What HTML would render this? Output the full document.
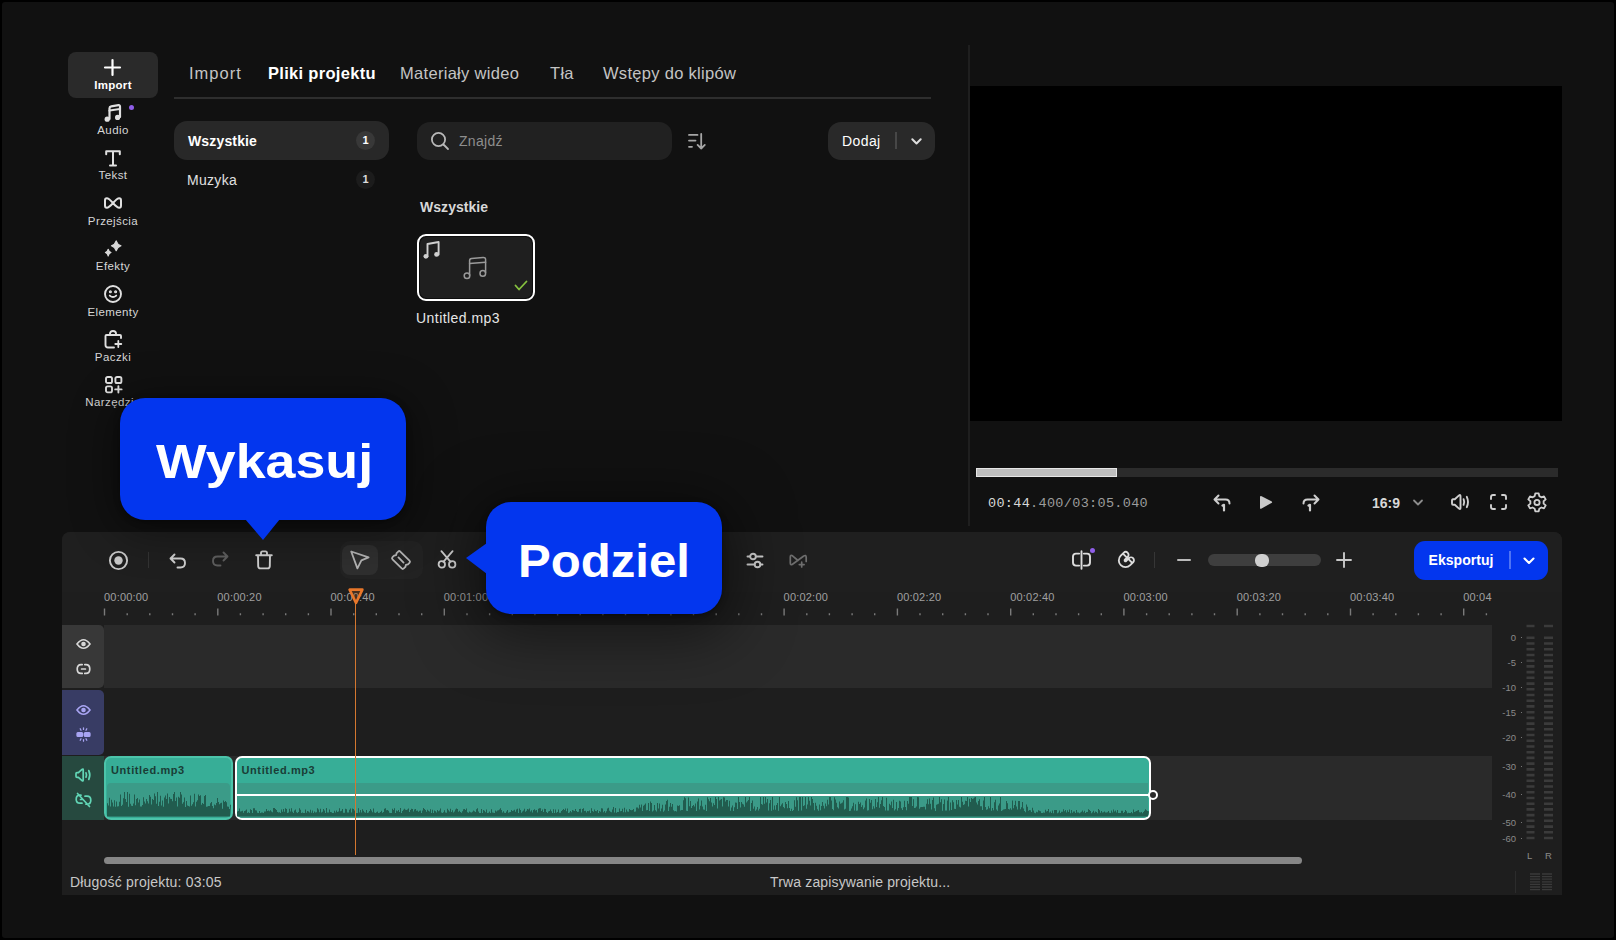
<!DOCTYPE html>
<html><head><meta charset="utf-8">
<style>
*{box-sizing:border-box;margin:0;padding:0}
html,body{width:1616px;height:940px;background:#000;overflow:hidden;font-family:"Liberation Sans",sans-serif;color:#ddd}
.a{position:absolute;white-space:nowrap}
#app{position:absolute;left:2px;top:2px;width:1612px;height:936px;background:#111;border-radius:3px}
.side{color:#d6d6d6;font-size:11.5px;letter-spacing:0.4px;text-align:center;width:90px;left:68px}
.tab{font-size:16.5px;letter-spacing:0.3px;color:#c4c4c4;top:63.8px}
svg{position:absolute;overflow:visible}
</style></head><body>
<div id="app"></div>

<!-- SIDEBAR -->
<div class="a" style="left:68px;top:52px;width:90px;height:46px;background:#2a2a2a;border-radius:8px"></div>
<svg style="left:104px;top:59px" width="17" height="17" viewBox="0 0 17 17"><path d="M8.5 1v15M1 8.5h15" stroke="#fff" stroke-width="2.2" stroke-linecap="round"/></svg>
<div class="a side" style="top:79px;color:#fff;font-weight:bold;letter-spacing:0.3px">Import</div>
<!-- audio -->
<svg style="left:103px;top:104px" width="19" height="19" viewBox="0 0 19 19" fill="none" stroke="#e0e0e0" stroke-width="2.2" stroke-linecap="round" stroke-linejoin="round"><path d="M6.5 15V4.2Q6.5 2.6 8.2 2.3L15.5 1.2Q17 1 17 2.6V13"/><path d="M6.5 6.5L17 5"/><circle cx="4.2" cy="15.2" r="2.6" fill="#e0e0e0" stroke="none"/><circle cx="14.6" cy="13.4" r="2.6" fill="#e0e0e0" stroke="none"/></svg>
<div class="a" style="left:128.5px;top:104.5px;width:5px;height:5px;border-radius:50%;background:#8f5ee8"></div>
<div class="a side" style="top:124px">Audio</div>
<!-- T -->
<svg style="left:105px;top:150px" width="16" height="17" viewBox="0 0 16 17" fill="none" stroke="#e0e0e0" stroke-width="2" stroke-linecap="round" stroke-linejoin="round"><path d="M1.2 4.3V1.2H14.8V4.3M8 1.2V15.6M5 15.6H11"/></svg>
<div class="a side" style="top:169px">Tekst</div>
<!-- bowtie -->
<svg style="left:104px;top:197px" width="18" height="12" viewBox="0 0 18 12" fill="none" stroke="#e0e0e0" stroke-width="2" stroke-linejoin="round"><path d="M9 6C6.4 3 4.4 1.2 2.8 1.2Q1 1.2 1 3.4V8.6Q1 10.8 2.8 10.8C4.4 10.8 6.4 9 9 6C11.6 3 13.6 1.2 15.2 1.2Q17 1.2 17 3.4V8.6Q17 10.8 15.2 10.8C13.6 10.8 11.6 9 9 6Z"/></svg>
<div class="a side" style="top:215px">Przejścia</div>
<!-- sparkles -->
<svg style="left:104px;top:240px" width="18" height="17" viewBox="0 0 18 17" fill="#d8d8d8" stroke="#d8d8d8" stroke-width="1.1" stroke-linejoin="round"><path d="M12.2 0.8Q13.4 4.6 17 5.8Q13.4 7 12.2 10.8Q11 7 7.4 5.8Q11 4.6 12.2 0.8Z"/><path d="M4.2 9.2Q4.9 11.9 7 12.6Q4.9 13.3 4.2 16Q3.5 13.3 1.4 12.6Q3.5 11.9 4.2 9.2Z"/></svg>
<div class="a side" style="top:260px">Efekty</div>
<!-- smiley -->
<svg style="left:104px;top:285px" width="18" height="18" viewBox="0 0 18 18" fill="none" stroke="#e0e0e0" stroke-width="1.9" stroke-linecap="round"><circle cx="9" cy="9" r="8"/><path d="M5.8 10.6Q9 13.6 12.2 10.6"/><circle cx="6.4" cy="6.8" r="0.6" fill="#e0e0e0"/><circle cx="11.6" cy="6.8" r="0.6" fill="#e0e0e0"/></svg>
<div class="a side" style="top:306px">Elementy</div>
<!-- bag -->
<svg style="left:104px;top:330px" width="18" height="19" viewBox="0 0 18 19" fill="none" stroke="#e0e0e0" stroke-width="1.9" stroke-linecap="round" stroke-linejoin="round"><path d="M6 5V3.6Q6 1 9 1Q12 1 12 3.6V5"/><path d="M10 17.5H4Q1.5 17.5 1.5 15V6Q1.5 5 2.5 5H16Q17 5 17 6V8"/><path d="M14.3 11V17M11.3 14H17.3" stroke-width="1.8"/></svg>
<div class="a side" style="top:351px">Paczki</div>
<!-- tools -->
<svg style="left:105px;top:376px" width="18" height="18" viewBox="0 0 18 18" fill="none" stroke="#e0e0e0" stroke-width="1.9" stroke-linejoin="round" stroke-linecap="round"><rect x="1" y="1" width="6" height="6" rx="1.6"/><rect x="10.4" y="1" width="6" height="6" rx="1.6"/><rect x="1" y="10.4" width="6" height="6" rx="1.6"/><path d="M13.4 10.2V16.6M10.2 13.4H16.6"/></svg>
<div class="a side" style="top:396px">Narzędzia</div>

<!-- TABS -->
<div class="a tab" style="left:189px;letter-spacing:1px">Import</div>
<div class="a tab" style="left:268px;color:#fff;font-weight:bold">Pliki projektu</div>
<div class="a tab" style="left:400px">Materiały wideo</div>
<div class="a tab" style="left:550px">Tła</div>
<div class="a tab" style="left:603px">Wstępy do klipów</div>
<div class="a" style="left:174px;top:97.2px;width:757px;height:1.6px;background:#2e2e2e"></div>

<!-- CATEGORY LIST -->
<div class="a" style="left:174px;top:121px;width:215px;height:39px;background:#282828;border-radius:13px"></div>
<div class="a" style="left:188px;top:133px;font-size:14px;font-weight:bold;color:#fff;letter-spacing:0.15px">Wszystkie</div>
<div class="a" style="left:356px;top:131px;width:19px;height:19px;border-radius:50%;background:#383838"></div>
<div class="a" style="left:356px;top:134px;width:19px;text-align:center;font-size:11px;font-weight:bold;color:#fff">1</div>
<div class="a" style="left:187px;top:171.5px;font-size:14px;color:#e0e0e0;letter-spacing:0.3px">Muzyka</div>
<div class="a" style="left:356px;top:170px;width:19px;height:19px;border-radius:50%;background:#1c1c1c"></div>
<div class="a" style="left:356px;top:173px;width:19px;text-align:center;font-size:11px;font-weight:bold;color:#ddd">1</div>

<!-- SEARCH -->
<div class="a" style="left:417px;top:121.5px;width:255px;height:38px;background:#212121;border-radius:13px"></div>
<svg style="left:430px;top:131px" width="20" height="20" viewBox="0 0 20 20" fill="none" stroke="#b8b8b8" stroke-width="1.8" stroke-linecap="round"><circle cx="8.5" cy="8.5" r="6.6"/><path d="M13.5 13.5L18 18"/></svg>
<div class="a" style="left:459px;top:133px;font-size:14px;color:#8e8e8e;letter-spacing:0.3px">Znajdź</div>
<!-- sort -->
<svg style="left:688px;top:133px" width="19" height="17" viewBox="0 0 19 17" fill="none" stroke="#a6a6a6" stroke-width="1.8" stroke-linecap="round" stroke-linejoin="round"><path d="M1 1.9H9.5M1 7.6H7.5M1 13.8H4"/><path d="M13.2 1V15.5M9.6 11.9L13.2 15.5L16.8 11.9"/></svg>

<!-- DODAJ -->
<div class="a" style="left:828px;top:121.5px;width:107px;height:38.5px;background:#292929;border-radius:13px"></div>
<div class="a" style="left:842px;top:133px;font-size:14px;color:#fff;letter-spacing:0.4px">Dodaj</div>
<div class="a" style="left:895px;top:132px;width:1.5px;height:17px;background:#474747"></div>
<svg style="left:911px;top:138px" width="11" height="7" viewBox="0 0 11 7" fill="none" stroke="#ddd" stroke-width="2" stroke-linecap="round" stroke-linejoin="round"><path d="M1.3 1.3L5.5 5.5L9.7 1.3"/></svg>

<div class="a" style="left:420px;top:199px;font-size:14px;font-weight:bold;color:#d8d8d8;letter-spacing:0.05px">Wszystkie</div>
<!-- thumbnail -->
<div class="a" style="left:417px;top:233.5px;width:117.5px;height:67px;border:2.2px solid #fff;border-radius:9px;background:#0e0e0e"></div>
<div class="a" style="left:420px;top:236.5px;width:111.5px;height:61px;border-radius:7px;background:#1f1f1f"></div>
<svg style="left:423px;top:240px" width="17" height="20" viewBox="0 0 17 20" fill="none" stroke="#d0d0d0" stroke-width="1.9" stroke-linecap="round" stroke-linejoin="round"><path d="M4.5 16.5V4L15.6 2V14.6"/><circle cx="2.9" cy="16.3" r="2.4" fill="#d0d0d0" stroke="none"/><circle cx="13.6" cy="14.4" r="2.4" fill="#d0d0d0" stroke="none"/></svg>
<svg style="left:463px;top:256px" width="24" height="24" viewBox="0 0 24 24" fill="none" stroke="#9a9a9a" stroke-width="1.5" stroke-linecap="round" stroke-linejoin="round"><path d="M6.6 19.2V4.6Q6.6 2.6 8.6 2.4L20 1.4Q22.6 1.2 22.6 3.6V16.4"/><path d="M6.6 7.6L22.6 6.3"/><circle cx="4" cy="19.8" r="2.8"/><circle cx="19.8" cy="17.4" r="2.8"/></svg>
<svg style="left:514px;top:280px" width="14" height="11" viewBox="0 0 14 11" fill="none" stroke="#86c23f" stroke-width="1.8" stroke-linecap="round" stroke-linejoin="round"><path d="M1.5 5.5L5 9.5L12.5 1.5"/></svg>
<div class="a" style="left:416px;top:310px;font-size:14px;color:#e6e6e6;letter-spacing:0.45px">Untitled.mp3</div>

<!-- PREVIEW -->
<div class="a" style="left:968px;top:44.5px;width:2px;height:481px;background:#1f1f1f"></div>
<div class="a" style="left:970px;top:86px;width:592px;height:335px;background:#000"></div>
<div class="a" style="left:976px;top:468px;width:582px;height:9px;background:#2b2b2b"></div>
<div class="a" style="left:976px;top:468px;width:141px;height:9px;background:#bebebe;border:1px solid #e6e6e6"></div>
<div class="a" style="left:988px;top:495.5px;font-family:'Liberation Mono',monospace;font-size:13.5px;color:#9c9c9c;letter-spacing:0.32px"><span style="color:#d8d8d8">00:44</span>.400/03:05.040</div>
<svg style="left:1213px;top:494px" width="19" height="18" viewBox="0 0 19 18" fill="none" stroke="#cfcfcf" stroke-width="2" stroke-linecap="round" stroke-linejoin="round"><path d="M5.5 1.5L1.5 5.5L5.5 9.5M1.5 5.5H12.5Q16.5 5.5 16.5 9.5"/><path d="M9.5 11.5L11 10.8V16.5" stroke-width="2.2"/></svg>
<svg style="left:1259px;top:495px" width="14" height="15" viewBox="0 0 14 15" fill="#c8c8c8"><path d="M1 2.2Q1 0.4 2.6 1.2L12.4 6.3Q13.9 7.2 12.4 8.1L2.6 13.6Q1 14.5 1 12.6Z"/></svg>
<svg style="left:1301px;top:494px" width="19" height="18" viewBox="0 0 19 18" fill="none" stroke="#cfcfcf" stroke-width="2" stroke-linecap="round" stroke-linejoin="round"><path d="M13.5 1.5L17.5 5.5L13.5 9.5M17.5 5.5H6.5Q2.5 5.5 2.5 9.5"/><path d="M7.5 11.5L9 10.8V16.5" stroke-width="2.2"/></svg>
<div class="a" style="left:1372px;top:495px;font-size:14px;font-weight:bold;color:#d8d8d8">16:9</div>
<svg style="left:1413px;top:499px" width="10" height="7" viewBox="0 0 10 7" fill="none" stroke="#8c8c8c" stroke-width="1.8" stroke-linecap="round" stroke-linejoin="round"><path d="M1 1.5L5 5.5L9 1.5"/></svg>
<svg style="left:1451px;top:494px" width="19" height="16" viewBox="0 0 19 16" fill="none" stroke="#d0d0d0" stroke-width="1.9" stroke-linecap="round" stroke-linejoin="round"><path d="M2 5.2Q1 5.2 1 6.5V9.5Q1 10.8 2 10.8H3.8L8 14.6Q9.5 15.8 9.5 13.8V2.2Q9.5 0.2 8 1.4L3.8 5.2Z"/><path d="M12.6 5.2Q13.8 8 12.6 10.8M15.8 2.8Q18.2 8 15.8 13.2"/></svg>
<svg style="left:1490px;top:494px" width="17" height="16" viewBox="0 0 17 16" fill="none" stroke="#d0d0d0" stroke-width="1.9" stroke-linecap="round" stroke-linejoin="round"><path d="M1 5V3Q1 1 3 1H5M12 1H14Q16 1 16 3V5M16 11V13Q16 15 14 15H12M5 15H3Q1 15 1 13V11"/></svg>
<svg style="left:1527px;top:492px" width="20" height="20" viewBox="0 0 20 20" fill="none" stroke="#d0d0d0" stroke-width="1.8" stroke-linejoin="round"><path d="M8.3 1.4H11.7L12.3 4.1L14.4 5.3L17 4.4L18.7 7.4L16.6 9.2V11.6L18.7 13.4L17 16.4L14.4 15.5L12.3 16.7L11.7 19.4H8.3L7.7 16.7L5.6 15.5L3 16.4L1.3 13.4L3.4 11.6V9.2L1.3 7.4L3 4.4L5.6 5.3L7.7 4.1Z"/><circle cx="10" cy="10.4" r="2.6"/></svg>

<!-- TIMELINE PANEL -->
<div class="a" style="left:62px;top:532px;width:1500px;height:362.5px;background:#1e1e1e;border-radius:8px 8px 0 0"></div>
<div class="a" style="left:62px;top:532px;width:1500px;height:60px;background:#1f1f1f;border-radius:8px 8px 0 0"></div>

<!-- TOOLBAR LEFT -->
<svg style="left:108px;top:550px" width="21" height="21" viewBox="0 0 21 21"><circle cx="10.5" cy="10.5" r="8.6" fill="none" stroke="#c8c8c8" stroke-width="1.9"/><circle cx="10.5" cy="10.5" r="4.2" fill="#c8c8c8"/></svg>
<div class="a" style="left:148px;top:552px;width:1px;height:16px;background:#333"></div>
<svg style="left:169px;top:552.5px" width="18" height="17" viewBox="0 0 18 17" fill="none" stroke="#cfcfcf" stroke-width="1.9" stroke-linecap="round" stroke-linejoin="round"><path d="M5.5 1.5L1.5 5.5L5.5 9.5M1.5 5.5H11.5Q16 5.5 16 10Q16 14.5 11.5 14.5H8.5"/></svg>
<svg style="left:211px;top:551px" width="18" height="17" viewBox="0 0 18 17" fill="none" stroke="#5e5e5e" stroke-width="1.9" stroke-linecap="round" stroke-linejoin="round"><path d="M12.5 1.5L16.5 5.5L12.5 9.5M16.5 5.5H6.5Q2 5.5 2 10Q2 14.5 6.5 14.5H9.5"/></svg>
<svg style="left:255px;top:550px" width="18" height="20" viewBox="0 0 18 20" fill="none" stroke="#cfcfcf" stroke-width="1.9" stroke-linecap="round" stroke-linejoin="round"><path d="M1.2 5.2H16.8M6 5V3Q6 1.4 7.6 1.4H10.4Q12 1.4 12 3V5M3 5.2L3.2 16.2Q3.3 18.4 5.5 18.4H12.5Q14.7 18.4 14.8 16.2L15 5.2"/></svg>
<!-- select group -->
<div class="a" style="left:339.5px;top:540.5px;width:83px;height:38px;background:#232323;border-radius:10px"></div>
<div class="a" style="left:342px;top:545px;width:36px;height:30px;background:#2f2f2f;border-radius:8px"></div>
<svg style="left:349px;top:549px" width="22" height="22" viewBox="0 0 22 22" fill="none" stroke="#b4b4b4" stroke-width="1.8" stroke-linejoin="round"><path d="M2.2 2.5L19.6 8.4L12.4 11.4L8.4 19.4Z"/></svg>
<svg style="left:386px;top:546px" width="30" height="28" viewBox="0 0 30 28" fill="none" stroke="#b4b4b4" stroke-width="1.8" stroke-linecap="round" stroke-linejoin="round"><g transform="translate(15 14) rotate(-45)"><path d="M-4 -8H-1.8L0 -6.9L1.8 -8H4Q5.5 -8 5.5 -6.5V6.5Q5.5 8 4 8H1.8L0 6.9L-1.8 8H-4Q-5.5 8 -5.5 6.5V-6.5Q-5.5 -8 -4 -8Z"/><path d="M0 -3.6V3.6"/></g></svg>
<svg style="left:437px;top:550px" width="20" height="20" viewBox="0 0 20 20" fill="none" stroke="#d0d0d0" stroke-width="1.8" stroke-linecap="round"><circle cx="4.8" cy="14.4" r="3.2"/><circle cx="15.2" cy="14.4" r="3.2"/><path d="M6.4 11.8L15.6 1.2M13.6 11.8L4.4 1.2"/></svg>

<!-- TOOLBAR MID/RIGHT -->
<svg style="left:746px;top:551px" width="18" height="17" viewBox="0 0 18 17" fill="none" stroke="#d0d0d0" stroke-width="1.9" stroke-linecap="round"><path d="M1.5 5.5H4M10 5.5H16.5M1.5 13.5H8.5M14.5 13.5H16.5"/><circle cx="7" cy="5.5" r="2.8"/><circle cx="11.5" cy="13.5" r="2.8"/></svg>
<svg style="left:788px;top:553px" width="21" height="16" viewBox="0 0 21 16" fill="none" stroke="#6e6e6e" stroke-width="1.7" stroke-linecap="round" stroke-linejoin="round"><path d="M10 7.5L4.5 2.8Q2.3 1.6 2.3 4V10Q2.3 12.4 4.5 11.2L15.4 3.2Q18.2 1.4 18.2 4.4V8.5"/><path d="M13.7 9.2V14M11.3 11.6H16.1"/></svg>
<svg style="left:1071px;top:550px" width="21" height="20" viewBox="0 0 21 20" fill="none" stroke="#dcdcdc" stroke-width="1.9" stroke-linecap="round" stroke-linejoin="round"><path d="M10.5 1.2V18.8M8.2 3.6H5Q2 3.6 2 6.6V12.6Q2 15.6 5 15.6H8.2M12.8 3.6H16Q19 3.6 19 6.6V12.6Q19 15.6 16 15.6H12.8"/></svg>
<div class="a" style="left:1089.5px;top:547.5px;width:5px;height:5px;border-radius:50%;background:#8f5ee8"></div>
<svg style="left:1112px;top:546px" width="28" height="28" viewBox="0 0 28 28" fill="none" stroke="#dcdcdc" stroke-width="2.1" stroke-linejoin="round"><g transform="translate(13.5 14.4) rotate(45) scale(0.88)"><path d="M-7.6 -4.6V0A7.6 7.6 0 0 0 7.6 0V-4.6A3.3 3.3 0 0 0 1 -4.6V0A1 1 0 0 1 -1 0V-4.6A3.3 3.3 0 0 0 -7.6 -4.6Z"/><path d="M-7.6 -3.4H-1M1 -3.4H7.6"/></g></svg>
<div class="a" style="left:1154px;top:552px;width:1px;height:16px;background:#363636"></div>
<div class="a" style="left:1177px;top:559px;width:13.5px;height:2px;background:#bbb;border-radius:1px"></div>
<div class="a" style="left:1208px;top:554px;width:113px;height:12px;background:#3e3e3e;border-radius:6px"></div>
<div class="a" style="left:1255px;top:553.5px;width:14px;height:13px;background:#cfcfcf;border-radius:6px"></div>
<svg style="left:1336px;top:552px" width="16" height="16" viewBox="0 0 16 16"><path d="M8 1V15M1 8H15" stroke="#c8c8c8" stroke-width="1.9" stroke-linecap="round"/></svg>
<!-- EXPORT -->
<div class="a" style="left:1414px;top:541px;width:134px;height:38.5px;background:#0336ee;border-radius:11px"></div>
<div class="a" style="left:1428.5px;top:552.3px;font-size:14px;font-weight:bold;color:#fff;letter-spacing:0.05px">Eksportuj</div>
<div class="a" style="left:1508.5px;top:551px;width:2px;height:18px;background:#4f74f4"></div>
<svg style="left:1523px;top:557px" width="12" height="8" viewBox="0 0 12 8" fill="none" stroke="#fff" stroke-width="2.1" stroke-linecap="round" stroke-linejoin="round"><path d="M1.5 1.5L6 6L10.5 1.5"/></svg>

<!-- RULER -->
<div class="a" style="left:62px;top:580px;width:1430px;height:40px;overflow:hidden"><div class="a" style="left:calc(-62px + 104.0px);top:11px;font-size:11px;color:#a0a0a0;letter-spacing:0.2px">00:00:00</div><div class="a" style="left:calc(-62px + 217.3px);top:11px;font-size:11px;color:#a0a0a0;letter-spacing:0.2px">00:00:20</div><div class="a" style="left:calc(-62px + 330.5px);top:11px;font-size:11px;color:#a0a0a0;letter-spacing:0.2px">00:00:40</div><div class="a" style="left:calc(-62px + 443.8px);top:11px;font-size:11px;color:#a0a0a0;letter-spacing:0.2px">00:01:00</div><div class="a" style="left:calc(-62px + 557.1px);top:11px;font-size:11px;color:#a0a0a0;letter-spacing:0.2px">00:01:20</div><div class="a" style="left:calc(-62px + 670.4px);top:11px;font-size:11px;color:#a0a0a0;letter-spacing:0.2px">00:01:40</div><div class="a" style="left:calc(-62px + 783.6px);top:11px;font-size:11px;color:#a0a0a0;letter-spacing:0.2px">00:02:00</div><div class="a" style="left:calc(-62px + 896.9px);top:11px;font-size:11px;color:#a0a0a0;letter-spacing:0.2px">00:02:20</div><div class="a" style="left:calc(-62px + 1010.2px);top:11px;font-size:11px;color:#a0a0a0;letter-spacing:0.2px">00:02:40</div><div class="a" style="left:calc(-62px + 1123.4px);top:11px;font-size:11px;color:#a0a0a0;letter-spacing:0.2px">00:03:00</div><div class="a" style="left:calc(-62px + 1236.7px);top:11px;font-size:11px;color:#a0a0a0;letter-spacing:0.2px">00:03:20</div><div class="a" style="left:calc(-62px + 1350.0px);top:11px;font-size:11px;color:#a0a0a0;letter-spacing:0.2px">00:03:40</div><div class="a" style="left:calc(-62px + 1463.2px);top:11px;font-size:11px;color:#a0a0a0;letter-spacing:0.2px">00:04:00</div></div><svg style="left:0;top:0" width="1616" height="940"><path d="M104.5 608.5V615.5M127.2 613.3V615.3M149.8 613.3V615.3M172.5 613.3V615.3M195.1 613.3V615.3M217.8 608.5V615.5M240.4 613.3V615.3M263.1 613.3V615.3M285.7 613.3V615.3M308.4 613.3V615.3M331.0 608.5V615.5M353.7 613.3V615.3M376.3 613.3V615.3M399.0 613.3V615.3M421.7 613.3V615.3M444.3 608.5V615.5M467.0 613.3V615.3M489.6 613.3V615.3M512.3 613.3V615.3M534.9 613.3V615.3M557.6 608.5V615.5M580.2 613.3V615.3M602.9 613.3V615.3M625.5 613.3V615.3M648.2 613.3V615.3M670.9 608.5V615.5M693.5 613.3V615.3M716.2 613.3V615.3M738.8 613.3V615.3M761.5 613.3V615.3M784.1 608.5V615.5M806.8 613.3V615.3M829.4 613.3V615.3M852.1 613.3V615.3M874.7 613.3V615.3M897.4 608.5V615.5M920.0 613.3V615.3M942.7 613.3V615.3M965.4 613.3V615.3M988.0 613.3V615.3M1010.7 608.5V615.5M1033.3 613.3V615.3M1056.0 613.3V615.3M1078.6 613.3V615.3M1101.3 613.3V615.3M1123.9 608.5V615.5M1146.6 613.3V615.3M1169.2 613.3V615.3M1191.9 613.3V615.3M1214.5 613.3V615.3M1237.2 608.5V615.5M1259.9 613.3V615.3M1282.5 613.3V615.3M1305.2 613.3V615.3M1327.8 613.3V615.3M1350.5 608.5V615.5M1373.1 613.3V615.3M1395.8 613.3V615.3M1418.4 613.3V615.3M1441.1 613.3V615.3M1463.7 608.5V615.5M1486.4 613.3V615.3" stroke="#7a7a7a" stroke-width="1.4"/></svg>

<!-- TRACKS -->
<div class="a" style="left:104px;top:624.5px;width:1387.7px;height:63.5px;background:#2a2a2a"></div>
<div class="a" style="left:62px;top:624.5px;width:42px;height:63.5px;background:#383838;border-radius:0 5px 5px 0"></div>
<svg style="left:76px;top:638px" width="15" height="12" viewBox="0 0 15 12" fill="none" stroke="#d8d8d8" stroke-width="1.6"><path d="M1 6Q7.5 -2.6 14 6Q7.5 14.6 1 6Z"/><circle cx="7.5" cy="6" r="1.5" fill="#d8d8d8"/></svg>
<svg style="left:76px;top:663px" width="15" height="12" viewBox="0 0 15 12" fill="none" stroke="#d8d8d8" stroke-width="1.7" stroke-linecap="round"><path d="M6.2 1.6H5Q1.2 1.6 1.2 6Q1.2 10.4 5 10.4H6.2M8.8 1.6H10Q13.8 1.6 13.8 6Q13.8 10.4 10 10.4H8.8M5.6 6H9.4"/></svg>

<div class="a" style="left:62px;top:689.5px;width:42px;height:65px;background:#383c64;border-radius:0 5px 5px 0"></div>
<svg style="left:76px;top:704px" width="15" height="12" viewBox="0 0 15 12" fill="none" stroke="#a8a4f2" stroke-width="1.6"><path d="M1 6Q7.5 -2.6 14 6Q7.5 14.6 1 6Z"/><circle cx="7.5" cy="6" r="1.5" fill="#a8a4f2"/></svg>
<svg style="left:76px;top:727px" width="15" height="15" viewBox="0 0 15 15" fill="none" stroke="#a8a4f2" stroke-width="1.3" stroke-linecap="round"><rect x="1" y="5.6" width="5.6" height="3.8" rx="1" fill="#a8a4f2"/><rect x="8.4" y="5.6" width="5.6" height="3.8" rx="1" fill="#a8a4f2"/><path d="M7.5 0.8V2.4M4.2 1.8L5 3.2M10.8 1.8L10 3.2M7.5 12.6V14.2M4.2 13.2L5 11.8M10.8 13.2L10 11.8"/></svg>

<div class="a" style="left:104px;top:756px;width:1387.7px;height:63.5px;background:#2a2a2a"></div>
<div class="a" style="left:62px;top:756px;width:42px;height:63.5px;background:#26493f"></div>
<svg style="left:75px;top:768px" width="17" height="14" viewBox="0 0 17 14" fill="none" stroke="#62d6b6" stroke-width="1.7" stroke-linecap="round" stroke-linejoin="round"><path d="M2 4.6Q1 4.6 1 5.8V8.2Q1 9.4 2 9.4H3.4L7 12.6Q8.2 13.6 8.2 12V2Q8.2 0.4 7 1.4L3.4 4.6Z"/><path d="M11 4.8Q12 7 11 9.2M13.8 2.6Q15.8 7 13.8 11.4"/></svg>
<svg style="left:75px;top:792px" width="17" height="16" viewBox="0 0 17 16" fill="none" stroke="#62d6b6" stroke-width="1.7" stroke-linecap="round"><path d="M6 3.2H5Q1.2 3.2 1.2 7.2Q1.2 11.2 5 11.2H7M10 4.2H12Q15.8 4.2 15.8 8.2Q15.8 12.2 12 12.2H11M5.5 7.5H7.5M2.5 1.5L14.5 14.5"/></svg>

<!-- CLIP 1 -->
<div class="a" style="left:104px;top:756px;width:129px;height:64px;background:#37ae97;border:2px solid #4cc4aa;border-radius:7px"></div>
<div class="a" style="left:107px;top:783px;width:123px;height:34px;background:#3b9b88;border-radius:4px"></div>
<svg style="left:0;top:0" width="1616" height="940"><path d="M107 816.5L107.0 803.3L108.0 803.3L108.0 805.6L109.0 805.6L109.0 797.7L110.0 797.7L110.0 806.4L111.0 806.4L111.0 799.8L112.0 799.8L112.0 802.6L113.0 802.6L113.0 806.6L114.0 806.6L114.0 800.3L115.0 800.3L115.0 806.8L116.0 806.8L116.0 801.5L117.0 801.5L117.0 806.5L118.0 806.5L118.0 806.3L119.0 806.3L119.0 801.7L120.0 801.7L120.0 794.4L121.0 794.4L121.0 805.9L122.0 805.9L122.0 804.7L123.0 804.7L123.0 798.2L124.0 798.2L124.0 792.0L125.0 792.0L125.0 799.1L126.0 799.1L126.0 802.1L127.0 802.1L127.0 792.0L128.0 792.0L128.0 806.7L129.0 806.7L129.0 793.7L130.0 793.7L130.0 803.8L131.0 803.8L131.0 805.7L132.0 805.7L132.0 806.0L133.0 806.0L133.0 803.5L134.0 803.5L134.0 794.6L135.0 794.6L135.0 805.2L136.0 805.2L136.0 799.0L137.0 799.0L137.0 798.0L138.0 798.0L138.0 802.5L139.0 802.5L139.0 799.6L140.0 799.6L140.0 806.5L141.0 806.5L141.0 806.6L142.0 806.6L142.0 804.9L143.0 804.9L143.0 797.2L144.0 797.2L144.0 801.6L145.0 801.6L145.0 803.4L146.0 803.4L146.0 798.9L147.0 798.9L147.0 801.2L148.0 801.2L148.0 803.6L149.0 803.6L149.0 795.0L150.0 795.0L150.0 796.8L151.0 796.8L151.0 804.4L152.0 804.4L152.0 799.1L153.0 799.1L153.0 800.0L154.0 800.0L154.0 793.4L155.0 793.4L155.0 796.3L156.0 796.3L156.0 803.8L157.0 803.8L157.0 792.0L158.0 792.0L158.0 806.0L159.0 806.0L159.0 801.8L160.0 801.8L160.0 795.7L161.0 795.7L161.0 805.6L162.0 805.6L162.0 800.6L163.0 800.6L163.0 806.7L164.0 806.7L164.0 797.4L165.0 797.4L165.0 795.6L166.0 795.6L166.0 799.1L167.0 799.1L167.0 793.4L168.0 793.4L168.0 803.4L169.0 803.4L169.0 796.9L170.0 796.9L170.0 798.8L171.0 798.8L171.0 799.0L172.0 799.0L172.0 801.2L173.0 801.2L173.0 794.1L174.0 794.1L174.0 792.0L175.0 792.0L175.0 800.9L176.0 800.9L176.0 797.5L177.0 797.5L177.0 806.6L178.0 806.6L178.0 796.8L179.0 796.8L179.0 797.8L180.0 797.8L180.0 792.0L181.0 792.0L181.0 794.5L182.0 794.5L182.0 803.8L183.0 803.8L183.0 802.3L184.0 802.3L184.0 797.4L185.0 797.4L185.0 806.9L186.0 806.9L186.0 801.1L187.0 801.1L187.0 805.4L188.0 805.4L188.0 806.0L189.0 806.0L189.0 806.6L190.0 806.6L190.0 795.5L191.0 795.5L191.0 805.8L192.0 805.8L192.0 804.3L193.0 804.3L193.0 802.2L194.0 802.2L194.0 793.7L195.0 793.7L195.0 806.5L196.0 806.5L196.0 801.7L197.0 801.7L197.0 800.2L198.0 800.2L198.0 794.4L199.0 794.4L199.0 795.9L200.0 795.9L200.0 795.3L201.0 795.3L201.0 804.8L202.0 804.8L202.0 803.0L203.0 803.0L203.0 803.9L204.0 803.9L204.0 795.9L205.0 795.9L205.0 794.9L206.0 794.9L206.0 806.7L207.0 806.7L207.0 806.5L208.0 806.5L208.0 806.0L209.0 806.0L209.0 806.1L210.0 806.1L210.0 803.2L211.0 803.2L211.0 801.9L212.0 801.9L212.0 806.1L213.0 806.1L213.0 808.3L214.0 808.3L214.0 804.6L215.0 804.6L215.0 805.3L216.0 805.3L216.0 803.1L217.0 803.1L217.0 798.1L218.0 798.1L218.0 801.9L219.0 801.9L219.0 804.2L220.0 804.2L220.0 803.2L221.0 803.2L221.0 802.7L222.0 802.7L222.0 808.7L223.0 808.7L223.0 800.4L224.0 800.4L224.0 802.0L225.0 802.0L225.0 801.1L226.0 801.1L226.0 802.3L227.0 802.3L227.0 806.6L228.0 806.6L228.0 806.7L229.0 806.7L229.0 809.0L230.0 809.0L230.0 804.8L231.0 804.8L230 816.5Z" fill="#215c4e"/></svg>
<div class="a" style="left:111px;top:764px;font-size:11px;font-weight:bold;color:#1a3d36;letter-spacing:0.6px">Untitled.mp3</div>
<!-- CLIP 2 -->
<div class="a" style="left:234.5px;top:756px;width:916px;height:64px;background:#37ae97;border:2.4px solid #fff;border-radius:7px"></div>
<div class="a" style="left:237px;top:783px;width:911px;height:34.5px;background:#3b9b88;border-radius:0 0 5px 5px"></div>
<svg style="left:0;top:0" width="1616" height="940"><path d="M237 816.5L237.0 811.5L238.0 811.5L238.0 810.9L239.0 810.9L239.0 808.6L240.0 808.6L240.0 811.4L241.0 811.4L241.0 811.2L242.0 811.2L242.0 810.7L243.0 810.7L243.0 812.7L244.0 812.7L244.0 811.1L245.0 811.1L245.0 810.5L246.0 810.5L246.0 809.5L247.0 809.5L247.0 813.0L248.0 813.0L248.0 812.2L249.0 812.2L249.0 813.0L250.0 813.0L250.0 809.3L251.0 809.3L251.0 810.1L252.0 810.1L252.0 813.1L253.0 813.1L253.0 808.2L254.0 808.2L254.0 808.3L255.0 808.3L255.0 810.3L256.0 810.3L256.0 810.6L257.0 810.6L257.0 812.8L258.0 812.8L258.0 813.1L259.0 813.1L259.0 811.1L260.0 811.1L260.0 813.0L261.0 813.0L261.0 812.6L262.0 812.6L262.0 812.4L263.0 812.4L263.0 813.1L264.0 813.1L264.0 811.4L265.0 811.4L265.0 811.5L266.0 811.5L266.0 809.1L267.0 809.1L267.0 811.1L268.0 811.1L268.0 810.4L269.0 810.4L269.0 811.2L270.0 811.2L270.0 810.3L271.0 810.3L271.0 811.4L272.0 811.4L272.0 812.3L273.0 812.3L273.0 808.1L274.0 808.1L274.0 808.1L275.0 808.1L275.0 809.1L276.0 809.1L276.0 810.0L277.0 810.0L277.0 812.1L278.0 812.1L278.0 812.5L279.0 812.5L279.0 812.2L280.0 812.2L280.0 813.0L281.0 813.0L281.0 809.6L282.0 809.6L282.0 811.7L283.0 811.7L283.0 809.1L284.0 809.1L284.0 811.8L285.0 811.8L285.0 808.3L286.0 808.3L286.0 809.1L287.0 809.1L287.0 813.1L288.0 813.1L288.0 812.6L289.0 812.6L289.0 808.7L290.0 808.7L290.0 811.4L291.0 811.4L291.0 808.2L292.0 808.2L292.0 811.7L293.0 811.7L293.0 813.0L294.0 813.0L294.0 810.5L295.0 810.5L295.0 809.5L296.0 809.5L296.0 812.3L297.0 812.3L297.0 813.0L298.0 813.0L298.0 812.0L299.0 812.0L299.0 808.3L300.0 808.3L300.0 809.7L301.0 809.7L301.0 812.9L302.0 812.9L302.0 812.4L303.0 812.4L303.0 812.9L304.0 812.9L304.0 813.0L305.0 813.0L305.0 809.4L306.0 809.4L306.0 812.7L307.0 812.7L307.0 810.9L308.0 810.9L308.0 811.5L309.0 811.5L309.0 812.6L310.0 812.6L310.0 809.8L311.0 809.8L311.0 812.8L312.0 812.8L312.0 810.4L313.0 810.4L313.0 812.9L314.0 812.9L314.0 811.6L315.0 811.6L315.0 812.6L316.0 812.6L316.0 812.3L317.0 812.3L317.0 808.2L318.0 808.2L318.0 809.4L319.0 809.4L319.0 812.2L320.0 812.2L320.0 808.8L321.0 808.8L321.0 812.6L322.0 812.6L322.0 811.8L323.0 811.8L323.0 809.0L324.0 809.0L324.0 810.4L325.0 810.4L325.0 812.9L326.0 812.9L326.0 808.1L327.0 808.1L327.0 812.6L328.0 812.6L328.0 812.4L329.0 812.4L329.0 809.6L330.0 809.6L330.0 812.1L331.0 812.1L331.0 812.2L332.0 812.2L332.0 813.0L333.0 813.0L333.0 813.0L334.0 813.0L334.0 810.7L335.0 810.7L335.0 812.4L336.0 812.4L336.0 810.6L337.0 810.6L337.0 811.9L338.0 811.9L338.0 811.5L339.0 811.5L339.0 808.3L340.0 808.3L340.0 811.3L341.0 811.3L341.0 810.8L342.0 810.8L342.0 809.0L343.0 809.0L343.0 812.7L344.0 812.7L344.0 812.8L345.0 812.8L345.0 808.7L346.0 808.7L346.0 809.3L347.0 809.3L347.0 812.4L348.0 812.4L348.0 812.6L349.0 812.6L349.0 809.8L350.0 809.8L350.0 808.5L351.0 808.5L351.0 812.6L352.0 812.6L352.0 808.4L353.0 808.4L353.0 808.9L354.0 808.9L354.0 810.6L355.0 810.6L355.0 811.6L356.0 811.6L356.0 812.9L357.0 812.9L357.0 813.1L358.0 813.1L358.0 808.3L359.0 808.3L359.0 812.5L360.0 812.5L360.0 810.0L361.0 810.0L361.0 812.4L362.0 812.4L362.0 809.3L363.0 809.3L363.0 810.7L364.0 810.7L364.0 812.2L365.0 812.2L365.0 812.7L366.0 812.7L366.0 809.9L367.0 809.9L367.0 813.0L368.0 813.0L368.0 812.5L369.0 812.5L369.0 810.9L370.0 810.9L370.0 809.1L371.0 809.1L371.0 810.6L372.0 810.6L372.0 812.3L373.0 812.3L373.0 808.6L374.0 808.6L374.0 812.6L375.0 812.6L375.0 813.1L376.0 813.1L376.0 812.3L377.0 812.3L377.0 811.5L378.0 811.5L378.0 813.0L379.0 813.0L379.0 812.7L380.0 812.7L380.0 811.9L381.0 811.9L381.0 810.8L382.0 810.8L382.0 812.8L383.0 812.8L383.0 811.9L384.0 811.9L384.0 808.8L385.0 808.8L385.0 808.2L386.0 808.2L386.0 810.3L387.0 810.3L387.0 810.1L388.0 810.1L388.0 810.7L389.0 810.7L389.0 812.8L390.0 812.8L390.0 813.1L391.0 813.1L391.0 813.1L392.0 813.1L392.0 808.7L393.0 808.7L393.0 810.0L394.0 810.0L394.0 808.3L395.0 808.3L395.0 813.1L396.0 813.1L396.0 810.4L397.0 810.4L397.0 811.3L398.0 811.3L398.0 809.9L399.0 809.9L399.0 812.1L400.0 812.1L400.0 808.0L401.0 808.0L401.0 813.0L402.0 813.0L402.0 811.0L403.0 811.0L403.0 809.8L404.0 809.8L404.0 808.7L405.0 808.7L405.0 809.8L406.0 809.8L406.0 810.0L407.0 810.0L407.0 809.5L408.0 809.5L408.0 808.6L409.0 808.6L409.0 812.0L410.0 812.0L410.0 810.1L411.0 810.1L411.0 808.7L412.0 808.7L412.0 808.9L413.0 808.9L413.0 811.6L414.0 811.6L414.0 809.5L415.0 809.5L415.0 809.0L416.0 809.0L416.0 810.8L417.0 810.8L417.0 810.5L418.0 810.5L418.0 811.8L419.0 811.8L419.0 810.7L420.0 810.7L420.0 810.6L421.0 810.6L421.0 813.0L422.0 813.0L422.0 810.4L423.0 810.4L423.0 808.1L424.0 808.1L424.0 808.9L425.0 808.9L425.0 809.9L426.0 809.9L426.0 811.8L427.0 811.8L427.0 809.8L428.0 809.8L428.0 810.8L429.0 810.8L429.0 811.5L430.0 811.5L430.0 809.2L431.0 809.2L431.0 813.0L432.0 813.0L432.0 809.7L433.0 809.7L433.0 813.1L434.0 813.1L434.0 810.6L435.0 810.6L435.0 811.3L436.0 811.3L436.0 812.5L437.0 812.5L437.0 810.1L438.0 810.1L438.0 811.2L439.0 811.2L439.0 810.6L440.0 810.6L440.0 808.6L441.0 808.6L441.0 812.4L442.0 812.4L442.0 813.1L443.0 813.1L443.0 812.2L444.0 812.2L444.0 810.2L445.0 810.2L445.0 812.6L446.0 812.6L446.0 812.7L447.0 812.7L447.0 808.7L448.0 808.7L448.0 810.3L449.0 810.3L449.0 811.5L450.0 811.5L450.0 808.8L451.0 808.8L451.0 812.1L452.0 812.1L452.0 810.3L453.0 810.3L453.0 812.6L454.0 812.6L454.0 811.6L455.0 811.6L455.0 809.4L456.0 809.4L456.0 808.6L457.0 808.6L457.0 808.9L458.0 808.9L458.0 811.8L459.0 811.8L459.0 810.7L460.0 810.7L460.0 812.1L461.0 812.1L461.0 812.8L462.0 812.8L462.0 811.2L463.0 811.2L463.0 809.2L464.0 809.2L464.0 809.1L465.0 809.1L465.0 810.0L466.0 810.0L466.0 808.4L467.0 808.4L467.0 812.3L468.0 812.3L468.0 812.7L469.0 812.7L469.0 811.5L470.0 811.5L470.0 812.3L471.0 812.3L471.0 812.6L472.0 812.6L472.0 811.7L473.0 811.7L473.0 810.5L474.0 810.5L474.0 811.2L475.0 811.2L475.0 812.1L476.0 812.1L476.0 809.2L477.0 809.2L477.0 808.2L478.0 808.2L478.0 811.5L479.0 811.5L479.0 813.0L480.0 813.0L480.0 813.1L481.0 813.1L481.0 808.9L482.0 808.9L482.0 813.1L483.0 813.1L483.0 810.0L484.0 810.0L484.0 810.8L485.0 810.8L485.0 812.2L486.0 812.2L486.0 809.5L487.0 809.5L487.0 813.1L488.0 813.1L488.0 812.8L489.0 812.8L489.0 811.4L490.0 811.4L490.0 813.1L491.0 813.1L491.0 809.2L492.0 809.2L492.0 812.5L493.0 812.5L493.0 812.8L494.0 812.8L494.0 813.1L495.0 813.1L495.0 810.5L496.0 810.5L496.0 811.5L497.0 811.5L497.0 810.5L498.0 810.5L498.0 810.3L499.0 810.3L499.0 809.4L500.0 809.4L500.0 808.3L501.0 808.3L501.0 810.1L502.0 810.1L502.0 812.6L503.0 812.6L503.0 811.3L504.0 811.3L504.0 812.7L505.0 812.7L505.0 813.1L506.0 813.1L506.0 811.4L507.0 811.4L507.0 810.0L508.0 810.0L508.0 812.7L509.0 812.7L509.0 812.3L510.0 812.3L510.0 812.0L511.0 812.0L511.0 810.1L512.0 810.1L512.0 811.1L513.0 811.1L513.0 810.6L514.0 810.6L514.0 809.7L515.0 809.7L515.0 811.8L516.0 811.8L516.0 809.5L517.0 809.5L517.0 808.7L518.0 808.7L518.0 813.0L519.0 813.0L519.0 808.5L520.0 808.5L520.0 809.9L521.0 809.9L521.0 812.8L522.0 812.8L522.0 811.5L523.0 811.5L523.0 810.5L524.0 810.5L524.0 808.7L525.0 808.7L525.0 811.8L526.0 811.8L526.0 810.8L527.0 810.8L527.0 808.9L528.0 808.9L528.0 809.4L529.0 809.4L529.0 808.4L530.0 808.4L530.0 811.4L531.0 811.4L531.0 810.3L532.0 810.3L532.0 812.6L533.0 812.6L533.0 809.9L534.0 809.9L534.0 809.3L535.0 809.3L535.0 810.4L536.0 810.4L536.0 809.9L537.0 809.9L537.0 812.6L538.0 812.6L538.0 808.7L539.0 808.7L539.0 808.2L540.0 808.2L540.0 808.2L541.0 808.2L541.0 811.0L542.0 811.0L542.0 809.5L543.0 809.5L543.0 812.1L544.0 812.1L544.0 808.7L545.0 808.7L545.0 809.0L546.0 809.0L546.0 812.0L547.0 812.0L547.0 813.0L548.0 813.0L548.0 811.5L549.0 811.5L549.0 810.9L550.0 810.9L550.0 809.6L551.0 809.6L551.0 811.3L552.0 811.3L552.0 813.1L553.0 813.1L553.0 809.3L554.0 809.3L554.0 813.0L555.0 813.0L555.0 809.4L556.0 809.4L556.0 812.7L557.0 812.7L557.0 812.0L558.0 812.0L558.0 809.5L559.0 809.5L559.0 812.8L560.0 812.8L560.0 812.8L561.0 812.8L561.0 811.1L562.0 811.1L562.0 809.9L563.0 809.9L563.0 809.1L564.0 809.1L564.0 810.1L565.0 810.1L565.0 808.4L566.0 808.4L566.0 811.2L567.0 811.2L567.0 808.4L568.0 808.4L568.0 813.0L569.0 813.0L569.0 812.5L570.0 812.5L570.0 811.1L571.0 811.1L571.0 812.2L572.0 812.2L572.0 809.9L573.0 809.9L573.0 810.4L574.0 810.4L574.0 811.1L575.0 811.1L575.0 809.1L576.0 809.1L576.0 810.9L577.0 810.9L577.0 812.1L578.0 812.1L578.0 811.8L579.0 811.8L579.0 809.1L580.0 809.1L580.0 808.7L581.0 808.7L581.0 812.6L582.0 812.6L582.0 809.1L583.0 809.1L583.0 808.3L584.0 808.3L584.0 811.1L585.0 811.1L585.0 810.8L586.0 810.8L586.0 812.6L587.0 812.6L587.0 811.0L588.0 811.0L588.0 811.2L589.0 811.2L589.0 810.6L590.0 810.6L590.0 813.1L591.0 813.1L591.0 808.3L592.0 808.3L592.0 811.1L593.0 811.1L593.0 811.7L594.0 811.7L594.0 809.4L595.0 809.4L595.0 810.9L596.0 810.9L596.0 811.3L597.0 811.3L597.0 810.1L598.0 810.1L598.0 813.0L599.0 813.0L599.0 811.0L600.0 811.0L600.0 811.7L601.0 811.7L601.0 808.2L602.0 808.2L602.0 808.4L603.0 808.4L603.0 812.2L604.0 812.2L604.0 811.1L605.0 811.1L605.0 812.7L606.0 812.7L606.0 811.2L607.0 811.2L607.0 808.6L608.0 808.6L608.0 807.8L609.0 807.8L609.0 810.8L610.0 810.8L610.0 811.7L611.0 811.7L611.0 812.3L612.0 812.3L612.0 809.6L613.0 809.6L613.0 807.0L614.0 807.0L614.0 812.5L615.0 812.5L615.0 808.1L616.0 808.1L616.0 812.8L617.0 812.8L617.0 812.1L618.0 812.1L618.0 811.9L619.0 811.9L619.0 808.5L620.0 808.5L620.0 811.2L621.0 811.2L621.0 811.0L622.0 811.0L622.0 808.8L623.0 808.8L623.0 812.3L624.0 812.3L624.0 807.7L625.0 807.7L625.0 812.2L626.0 812.2L626.0 809.5L627.0 809.5L627.0 811.4L628.0 811.4L628.0 811.7L629.0 811.7L629.0 809.1L630.0 809.1L630.0 809.9L631.0 809.9L631.0 810.3L632.0 810.3L632.0 810.0L633.0 810.0L633.0 808.9L634.0 808.9L634.0 811.8L635.0 811.8L635.0 811.4L636.0 811.4L636.0 807.6L637.0 807.6L637.0 807.5L638.0 807.5L638.0 808.5L639.0 808.5L639.0 804.8L640.0 804.8L640.0 807.5L641.0 807.5L641.0 804.5L642.0 804.5L642.0 811.0L643.0 811.0L643.0 805.8L644.0 805.8L644.0 804.8L645.0 804.8L645.0 803.5L646.0 803.5L646.0 810.2L647.0 810.2L647.0 810.1L648.0 810.1L648.0 802.9L649.0 802.9L649.0 810.9L650.0 810.9L650.0 801.5L651.0 801.5L651.0 803.0L652.0 803.0L652.0 811.4L653.0 811.4L653.0 810.6L654.0 810.6L654.0 804.9L655.0 804.9L655.0 810.3L656.0 810.3L656.0 811.5L657.0 811.5L657.0 803.1L658.0 803.1L658.0 808.5L659.0 808.5L659.0 803.6L660.0 803.6L660.0 811.2L661.0 811.2L661.0 808.6L662.0 808.6L662.0 804.8L663.0 804.8L663.0 811.8L664.0 811.8L664.0 810.5L665.0 810.5L665.0 804.6L666.0 804.6L666.0 800.9L667.0 800.9L667.0 799.8L668.0 799.8L668.0 811.1L669.0 811.1L669.0 806.8L670.0 806.8L670.0 803.0L671.0 803.0L671.0 806.7L672.0 806.7L672.0 803.9L673.0 803.9L673.0 810.3L674.0 810.3L674.0 811.3L675.0 811.3L675.0 811.0L676.0 811.0L676.0 811.4L677.0 811.4L677.0 805.6L678.0 805.6L678.0 806.1L679.0 806.1L679.0 805.2L680.0 805.2L680.0 810.5L681.0 810.5L681.0 810.1L682.0 810.1L682.0 809.9L683.0 809.9L683.0 800.2L684.0 800.2L684.0 797.2L685.0 797.2L685.0 798.3L686.0 798.3L686.0 810.8L687.0 810.8L687.0 811.0L688.0 811.0L688.0 797.5L689.0 797.5L689.0 806.2L690.0 806.2L690.0 800.9L691.0 800.9L691.0 808.1L692.0 808.1L692.0 806.0L693.0 806.0L693.0 805.1L694.0 805.1L694.0 806.4L695.0 806.4L695.0 803.5L696.0 803.5L696.0 811.1L697.0 811.1L697.0 801.5L698.0 801.5L698.0 798.5L699.0 798.5L699.0 809.6L700.0 809.6L700.0 805.7L701.0 805.7L701.0 800.5L702.0 800.5L702.0 806.5L703.0 806.5L703.0 809.4L704.0 809.4L704.0 809.8L705.0 809.8L705.0 804.7L706.0 804.7L706.0 811.0L707.0 811.0L707.0 797.3L708.0 797.3L708.0 799.2L709.0 799.2L709.0 801.2L710.0 801.2L710.0 798.0L711.0 798.0L711.0 802.6L712.0 802.6L712.0 806.5L713.0 806.5L713.0 803.2L714.0 803.2L714.0 804.9L715.0 804.9L715.0 797.0L716.0 797.0L716.0 799.1L717.0 799.1L717.0 808.6L718.0 808.6L718.0 797.0L719.0 797.0L719.0 800.4L720.0 800.4L720.0 799.7L721.0 799.7L721.0 798.9L722.0 798.9L722.0 806.5L723.0 806.5L723.0 797.2L724.0 797.2L724.0 797.6L725.0 797.6L725.0 801.4L726.0 801.4L726.0 799.9L727.0 799.9L727.0 800.0L728.0 800.0L728.0 806.5L729.0 806.5L729.0 800.8L730.0 800.8L730.0 810.7L731.0 810.7L731.0 807.5L732.0 807.5L732.0 805.5L733.0 805.5L733.0 811.0L734.0 811.0L734.0 807.3L735.0 807.3L735.0 802.4L736.0 802.4L736.0 802.7L737.0 802.7L737.0 809.0L738.0 809.0L738.0 797.0L739.0 797.0L739.0 801.9L740.0 801.9L740.0 807.5L741.0 807.5L741.0 802.0L742.0 802.0L742.0 803.7L743.0 803.7L743.0 804.4L744.0 804.4L744.0 806.7L745.0 806.7L745.0 797.0L746.0 797.0L746.0 802.4L747.0 802.4L747.0 801.2L748.0 801.2L748.0 800.0L749.0 800.0L749.0 797.0L750.0 797.0L750.0 811.0L751.0 811.0L751.0 802.9L752.0 802.9L752.0 800.5L753.0 800.5L753.0 808.7L754.0 808.7L754.0 806.6L755.0 806.6L755.0 810.8L756.0 810.8L756.0 809.4L757.0 809.4L757.0 807.0L758.0 807.0L758.0 810.4L759.0 810.4L759.0 808.7L760.0 808.7L760.0 797.0L761.0 797.0L761.0 804.1L762.0 804.1L762.0 804.8L763.0 804.8L763.0 797.0L764.0 797.0L764.0 803.7L765.0 803.7L765.0 797.0L766.0 797.0L766.0 802.5L767.0 802.5L767.0 799.0L768.0 799.0L768.0 810.6L769.0 810.6L769.0 803.2L770.0 803.2L770.0 800.1L771.0 800.1L771.0 810.8L772.0 810.8L772.0 797.0L773.0 797.0L773.0 809.8L774.0 809.8L774.0 805.4L775.0 805.4L775.0 809.7L776.0 809.7L776.0 805.0L777.0 805.0L777.0 803.0L778.0 803.0L778.0 810.8L779.0 810.8L779.0 797.0L780.0 797.0L780.0 806.3L781.0 806.3L781.0 804.5L782.0 804.5L782.0 803.2L783.0 803.2L783.0 807.1L784.0 807.1L784.0 808.3L785.0 808.3L785.0 802.1L786.0 802.1L786.0 803.9L787.0 803.9L787.0 808.3L788.0 808.3L788.0 800.9L789.0 800.9L789.0 808.1L790.0 808.1L790.0 811.0L791.0 811.0L791.0 808.8L792.0 808.8L792.0 810.9L793.0 810.9L793.0 809.9L794.0 809.9L794.0 800.2L795.0 800.2L795.0 806.7L796.0 806.7L796.0 797.2L797.0 797.2L797.0 800.3L798.0 800.3L798.0 810.8L799.0 810.8L799.0 797.0L800.0 797.0L800.0 797.0L801.0 797.0L801.0 810.6L802.0 810.6L802.0 797.0L803.0 797.0L803.0 806.1L804.0 806.1L804.0 805.3L805.0 805.3L805.0 797.0L806.0 797.0L806.0 808.8L807.0 808.8L807.0 804.5L808.0 804.5L808.0 797.0L809.0 797.0L809.0 800.8L810.0 800.8L810.0 805.5L811.0 805.5L811.0 797.0L812.0 797.0L812.0 798.9L813.0 798.9L813.0 803.1L814.0 803.1L814.0 810.3L815.0 810.3L815.0 802.7L816.0 802.7L816.0 805.7L817.0 805.7L817.0 809.3L818.0 809.3L818.0 810.8L819.0 810.8L819.0 804.5L820.0 804.5L820.0 810.2L821.0 810.2L821.0 805.9L822.0 805.9L822.0 801.9L823.0 801.9L823.0 805.7L824.0 805.7L824.0 808.6L825.0 808.6L825.0 803.5L826.0 803.5L826.0 806.3L827.0 806.3L827.0 799.7L828.0 799.7L828.0 804.4L829.0 804.4L829.0 797.0L830.0 797.0L830.0 797.0L831.0 797.0L831.0 800.6L832.0 800.6L832.0 808.9L833.0 808.9L833.0 810.3L834.0 810.3L834.0 797.3L835.0 797.3L835.0 799.6L836.0 799.6L836.0 802.7L837.0 802.7L837.0 807.2L838.0 807.2L838.0 808.5L839.0 808.5L839.0 801.6L840.0 801.6L840.0 803.8L841.0 803.8L841.0 803.3L842.0 803.3L842.0 802.5L843.0 802.5L843.0 800.2L844.0 800.2L844.0 809.5L845.0 809.5L845.0 808.8L846.0 808.8L846.0 797.0L847.0 797.0L847.0 797.0L848.0 797.0L848.0 797.6L849.0 797.6L849.0 810.9L850.0 810.9L850.0 810.7L851.0 810.7L851.0 808.5L852.0 808.5L852.0 806.2L853.0 806.2L853.0 802.7L854.0 802.7L854.0 810.4L855.0 810.4L855.0 804.2L856.0 804.2L856.0 810.7L857.0 810.7L857.0 810.5L858.0 810.5L858.0 801.7L859.0 801.7L859.0 804.1L860.0 804.1L860.0 802.6L861.0 802.6L861.0 807.0L862.0 807.0L862.0 805.3L863.0 805.3L863.0 809.2L864.0 809.2L864.0 807.4L865.0 807.4L865.0 800.4L866.0 800.4L866.0 798.4L867.0 798.4L867.0 810.6L868.0 810.6L868.0 810.2L869.0 810.2L869.0 799.1L870.0 799.1L870.0 802.7L871.0 802.7L871.0 799.9L872.0 799.9L872.0 809.2L873.0 809.2L873.0 806.2L874.0 806.2L874.0 808.6L875.0 808.6L875.0 799.0L876.0 799.0L876.0 807.1L877.0 807.1L877.0 802.2L878.0 802.2L878.0 797.0L879.0 797.0L879.0 807.7L880.0 807.7L880.0 804.1L881.0 804.1L881.0 800.3L882.0 800.3L882.0 797.0L883.0 797.0L883.0 806.1L884.0 806.1L884.0 807.1L885.0 807.1L885.0 810.4L886.0 810.4L886.0 797.7L887.0 797.7L887.0 810.6L888.0 810.6L888.0 810.6L889.0 810.6L889.0 803.8L890.0 803.8L890.0 805.2L891.0 805.2L891.0 801.5L892.0 801.5L892.0 808.1L893.0 808.1L893.0 799.7L894.0 799.7L894.0 810.6L895.0 810.6L895.0 809.2L896.0 809.2L896.0 802.0L897.0 802.0L897.0 810.6L898.0 810.6L898.0 808.0L899.0 808.0L899.0 800.8L900.0 800.8L900.0 801.4L901.0 801.4L901.0 808.3L902.0 808.3L902.0 810.0L903.0 810.0L903.0 807.2L904.0 807.2L904.0 800.7L905.0 800.7L905.0 807.1L906.0 807.1L906.0 810.3L907.0 810.3L907.0 801.1L908.0 801.1L908.0 803.7L909.0 803.7L909.0 797.0L910.0 797.0L910.0 797.0L911.0 797.0L911.0 797.0L912.0 797.0L912.0 806.0L913.0 806.0L913.0 799.2L914.0 799.2L914.0 808.0L915.0 808.0L915.0 807.8L916.0 807.8L916.0 806.6L917.0 806.6L917.0 797.0L918.0 797.0L918.0 797.2L919.0 797.2L919.0 808.8L920.0 808.8L920.0 807.2L921.0 807.2L921.0 807.1L922.0 807.1L922.0 807.1L923.0 807.1L923.0 806.7L924.0 806.7L924.0 806.8L925.0 806.8L925.0 809.4L926.0 809.4L926.0 803.8L927.0 803.8L927.0 799.3L928.0 799.3L928.0 804.2L929.0 804.2L929.0 798.5L930.0 798.5L930.0 803.8L931.0 803.8L931.0 809.6L932.0 809.6L932.0 800.1L933.0 800.1L933.0 797.5L934.0 797.5L934.0 808.3L935.0 808.3L935.0 811.0L936.0 811.0L936.0 804.7L937.0 804.7L937.0 804.2L938.0 804.2L938.0 803.8L939.0 803.8L939.0 797.0L940.0 797.0L940.0 802.2L941.0 802.2L941.0 799.2L942.0 799.2L942.0 810.7L943.0 810.7L943.0 804.1L944.0 804.1L944.0 799.5L945.0 799.5L945.0 810.6L946.0 810.6L946.0 810.6L947.0 810.6L947.0 800.5L948.0 800.5L948.0 797.1L949.0 797.1L949.0 810.6L950.0 810.6L950.0 802.5L951.0 802.5L951.0 810.0L952.0 810.0L952.0 800.3L953.0 800.3L953.0 802.2L954.0 802.2L954.0 808.8L955.0 808.8L955.0 809.1L956.0 809.1L956.0 800.0L957.0 800.0L957.0 804.6L958.0 804.6L958.0 800.0L959.0 800.0L959.0 806.7L960.0 806.7L960.0 807.5L961.0 807.5L961.0 797.0L962.0 797.0L962.0 801.8L963.0 801.8L963.0 805.0L964.0 805.0L964.0 804.3L965.0 804.3L965.0 800.8L966.0 800.8L966.0 801.1L967.0 801.1L967.0 797.0L968.0 797.0L968.0 806.4L969.0 806.4L969.0 798.7L970.0 798.7L970.0 801.9L971.0 801.9L971.0 798.1L972.0 798.1L972.0 799.1L973.0 799.1L973.0 798.5L974.0 798.5L974.0 797.4L975.0 797.4L975.0 797.0L976.0 797.0L976.0 802.4L977.0 802.4L977.0 804.5L978.0 804.5L978.0 801.1L979.0 801.1L979.0 799.2L980.0 799.2L980.0 806.2L981.0 806.2L981.0 806.3L982.0 806.3L982.0 810.0L983.0 810.0L983.0 800.4L984.0 800.4L984.0 797.0L985.0 797.0L985.0 807.0L986.0 807.0L986.0 809.7L987.0 809.7L987.0 809.3L988.0 809.3L988.0 806.2L989.0 806.2L989.0 808.2L990.0 808.2L990.0 797.0L991.0 797.0L991.0 810.8L992.0 810.8L992.0 807.9L993.0 807.9L993.0 810.3L994.0 810.3L994.0 802.3L995.0 802.3L995.0 799.7L996.0 799.7L996.0 809.6L997.0 809.6L997.0 810.7L998.0 810.7L998.0 805.6L999.0 805.6L999.0 803.5L1000.0 803.5L1000.0 797.0L1001.0 797.0L1001.0 810.9L1002.0 810.9L1002.0 810.3L1003.0 810.3L1003.0 809.5L1004.0 809.5L1004.0 809.2L1005.0 809.2L1005.0 808.9L1006.0 808.9L1006.0 800.9L1007.0 800.9L1007.0 803.3L1008.0 803.3L1008.0 809.1L1009.0 809.1L1009.0 809.5L1010.0 809.5L1010.0 808.3L1011.0 808.3L1011.0 809.7L1012.0 809.7L1012.0 800.4L1013.0 800.4L1013.0 808.2L1014.0 808.2L1014.0 805.0L1015.0 805.0L1015.0 800.7L1016.0 800.7L1016.0 806.6L1017.0 806.6L1017.0 809.6L1018.0 809.6L1018.0 801.0L1019.0 801.0L1019.0 801.1L1020.0 801.1L1020.0 809.3L1021.0 809.3L1021.0 807.2L1022.0 807.2L1022.0 802.1L1023.0 802.1L1023.0 808.6L1024.0 808.6L1024.0 811.1L1025.0 811.1L1025.0 812.3L1026.0 812.3L1026.0 804.6L1027.0 804.6L1027.0 806.7L1028.0 806.7L1028.0 810.7L1029.0 810.7L1029.0 809.9L1030.0 809.9L1030.0 810.3L1031.0 810.3L1031.0 812.0L1032.0 812.0L1032.0 807.7L1033.0 807.7L1033.0 810.5L1034.0 810.5L1034.0 812.7L1035.0 812.7L1035.0 813.3L1036.0 813.3L1036.0 811.8L1037.0 811.8L1037.0 812.2L1038.0 812.2L1038.0 810.2L1039.0 810.2L1039.0 810.7L1040.0 810.7L1040.0 811.2L1041.0 811.2L1041.0 813.0L1042.0 813.0L1042.0 813.0L1043.0 813.0L1043.0 812.4L1044.0 812.4L1044.0 812.7L1045.0 812.7L1045.0 809.8L1046.0 809.8L1046.0 811.6L1047.0 811.6L1047.0 811.0L1048.0 811.0L1048.0 809.1L1049.0 809.1L1049.0 812.6L1050.0 812.6L1050.0 811.5L1051.0 811.5L1051.0 813.0L1052.0 813.0L1052.0 810.4L1053.0 810.4L1053.0 813.3L1054.0 813.3L1054.0 810.1L1055.0 810.1L1055.0 809.9L1056.0 809.9L1056.0 810.1L1057.0 810.1L1057.0 813.2L1058.0 813.2L1058.0 812.6L1059.0 812.6L1059.0 810.6L1060.0 810.6L1060.0 813.1L1061.0 813.1L1061.0 811.8L1062.0 811.8L1062.0 811.8L1063.0 811.8L1063.0 809.3L1064.0 809.3L1064.0 811.3L1065.0 811.3L1065.0 809.9L1066.0 809.9L1066.0 812.5L1067.0 812.5L1067.0 810.2L1068.0 810.2L1068.0 812.1L1069.0 812.1L1069.0 809.5L1070.0 809.5L1070.0 813.2L1071.0 813.2L1071.0 810.0L1072.0 810.0L1072.0 812.8L1073.0 812.8L1073.0 811.5L1074.0 811.5L1074.0 811.6L1075.0 811.6L1075.0 813.0L1076.0 813.0L1076.0 810.0L1077.0 810.0L1077.0 812.5L1078.0 812.5L1078.0 812.5L1079.0 812.5L1079.0 813.2L1080.0 813.2L1080.0 812.5L1081.0 812.5L1081.0 811.8L1082.0 811.8L1082.0 810.6L1083.0 810.6L1083.0 812.3L1084.0 812.3L1084.0 810.8L1085.0 810.8L1085.0 813.1L1086.0 813.1L1086.0 812.1L1087.0 812.1L1087.0 811.9L1088.0 811.9L1088.0 809.2L1089.0 809.2L1089.0 810.0L1090.0 810.0L1090.0 811.0L1091.0 811.0L1091.0 813.3L1092.0 813.3L1092.0 812.2L1093.0 812.2L1093.0 810.7L1094.0 810.7L1094.0 812.7L1095.0 812.7L1095.0 811.4L1096.0 811.4L1096.0 811.9L1097.0 811.9L1097.0 813.3L1098.0 813.3L1098.0 809.1L1099.0 809.1L1099.0 810.2L1100.0 810.2L1100.0 812.8L1101.0 812.8L1101.0 811.1L1102.0 811.1L1102.0 812.5L1103.0 812.5L1103.0 812.2L1104.0 812.2L1104.0 811.5L1105.0 811.5L1105.0 812.5L1106.0 812.5L1106.0 812.4L1107.0 812.4L1107.0 812.2L1108.0 812.2L1108.0 810.9L1109.0 810.9L1109.0 812.7L1110.0 812.7L1110.0 812.9L1111.0 812.9L1111.0 810.6L1112.0 810.6L1112.0 812.4L1113.0 812.4L1113.0 809.4L1114.0 809.4L1114.0 811.4L1115.0 811.4L1115.0 810.6L1116.0 810.6L1116.0 812.4L1117.0 812.4L1117.0 810.0L1118.0 810.0L1118.0 813.1L1119.0 813.1L1119.0 813.0L1120.0 813.0L1120.0 813.1L1121.0 813.1L1121.0 810.8L1122.0 810.8L1122.0 810.7L1123.0 810.7L1123.0 812.9L1124.0 812.9L1124.0 812.1L1125.0 812.1L1125.0 810.0L1126.0 810.0L1126.0 811.3L1127.0 811.3L1127.0 813.2L1128.0 813.2L1128.0 812.8L1129.0 812.8L1129.0 813.0L1130.0 813.0L1130.0 813.1L1131.0 813.1L1131.0 812.1L1132.0 812.1L1132.0 813.2L1133.0 813.2L1133.0 809.5L1134.0 809.5L1134.0 812.0L1135.0 812.0L1135.0 811.6L1136.0 811.6L1136.0 811.0L1137.0 811.0L1137.0 810.4L1138.0 810.4L1138.0 810.1L1139.0 810.1L1139.0 812.2L1140.0 812.2L1140.0 812.4L1141.0 812.4L1141.0 812.1L1142.0 812.1L1142.0 813.3L1143.0 813.3L1143.0 812.1L1144.0 812.1L1144.0 810.7L1145.0 810.7L1145.0 809.2L1146.0 809.2L1146.0 810.2L1147.0 810.2L1147.0 810.9L1148.0 810.9L1148.0 811.2L1149.0 811.2L1148 816.5Z" fill="#215c4e"/></svg>
<div class="a" style="left:237px;top:793.5px;width:913px;height:2.2px;background:#fff"></div>
<div class="a" style="left:1147.5px;top:789.8px;width:10px;height:10px;border-radius:50%;border:2.3px solid #fff;background:#2a2a2a"></div>
<div class="a" style="left:241.5px;top:764px;font-size:11px;font-weight:bold;color:#1a3d36;letter-spacing:0.6px">Untitled.mp3</div>

<!-- PLAYHEAD -->
<div class="a" style="left:354.7px;top:600px;width:1.6px;height:255px;background:#d4772f"></div>
<svg style="left:347px;top:587px" width="18" height="19" viewBox="0 0 18 19" fill="rgba(150,80,30,.35)" stroke="#e8772a" stroke-width="2.6" stroke-linejoin="round"><path d="M2.6 2.6H15.4L9 16Z"/></svg>

<!-- METER -->
<div class="a" style="left:1480px;top:632.0px;width:36px;text-align:right;font-size:9.5px;color:#8a8a8a">0</div>
<div class="a" style="left:1520.5px;top:637.0px;width:1px;height:1px;background:#777"></div>
<div class="a" style="left:1480px;top:657.0px;width:36px;text-align:right;font-size:9.5px;color:#8a8a8a">-5</div>
<div class="a" style="left:1520.5px;top:662.0px;width:1px;height:1px;background:#777"></div>
<div class="a" style="left:1480px;top:682.0px;width:36px;text-align:right;font-size:9.5px;color:#8a8a8a">-10</div>
<div class="a" style="left:1520.5px;top:687.0px;width:1px;height:1px;background:#777"></div>
<div class="a" style="left:1480px;top:707.0px;width:36px;text-align:right;font-size:9.5px;color:#8a8a8a">-15</div>
<div class="a" style="left:1520.5px;top:712.0px;width:1px;height:1px;background:#777"></div>
<div class="a" style="left:1480px;top:732.0px;width:36px;text-align:right;font-size:9.5px;color:#8a8a8a">-20</div>
<div class="a" style="left:1520.5px;top:737.0px;width:1px;height:1px;background:#777"></div>
<div class="a" style="left:1480px;top:760.5px;width:36px;text-align:right;font-size:9.5px;color:#8a8a8a">-30</div>
<div class="a" style="left:1520.5px;top:765.5px;width:1px;height:1px;background:#777"></div>
<div class="a" style="left:1480px;top:788.7px;width:36px;text-align:right;font-size:9.5px;color:#8a8a8a">-40</div>
<div class="a" style="left:1520.5px;top:793.7px;width:1px;height:1px;background:#777"></div>
<div class="a" style="left:1480px;top:817.0px;width:36px;text-align:right;font-size:9.5px;color:#8a8a8a">-50</div>
<div class="a" style="left:1520.5px;top:822.0px;width:1px;height:1px;background:#777"></div>
<div class="a" style="left:1480px;top:833.0px;width:36px;text-align:right;font-size:9.5px;color:#8a8a8a">-60</div>
<div class="a" style="left:1520.5px;top:838.0px;width:1px;height:1px;background:#777"></div>
<svg style="left:0;top:0" width="1616" height="940"><path d="M1526.5 626H1534.5M1544 626H1553M1526.5 637.8H1534.5M1544 637.8H1553M1526.5 643.5H1534.5M1544 643.5H1553M1526.5 649.2H1534.5M1544 649.2H1553M1526.5 655.0H1534.5M1544 655.0H1553M1526.5 660.7H1534.5M1544 660.7H1553M1526.5 666.4H1534.5M1544 666.4H1553M1526.5 672.1H1534.5M1544 672.1H1553M1526.5 677.8H1534.5M1544 677.8H1553M1526.5 683.6H1534.5M1544 683.6H1553M1526.5 689.3H1534.5M1544 689.3H1553M1526.5 695.0H1534.5M1544 695.0H1553M1526.5 700.7H1534.5M1544 700.7H1553M1526.5 706.4H1534.5M1544 706.4H1553M1526.5 712.2H1534.5M1544 712.2H1553M1526.5 717.9H1534.5M1544 717.9H1553M1526.5 723.6H1534.5M1544 723.6H1553M1526.5 729.3H1534.5M1544 729.3H1553M1526.5 735.0H1534.5M1544 735.0H1553M1526.5 740.8H1534.5M1544 740.8H1553M1526.5 746.5H1534.5M1544 746.5H1553M1526.5 752.2H1534.5M1544 752.2H1553M1526.5 757.9H1534.5M1544 757.9H1553M1526.5 763.6H1534.5M1544 763.6H1553M1526.5 769.4H1534.5M1544 769.4H1553M1526.5 775.1H1534.5M1544 775.1H1553M1526.5 780.8H1534.5M1544 780.8H1553M1526.5 786.5H1534.5M1544 786.5H1553M1526.5 792.2H1534.5M1544 792.2H1553M1526.5 798.0H1534.5M1544 798.0H1553M1526.5 803.7H1534.5M1544 803.7H1553M1526.5 809.4H1534.5M1544 809.4H1553M1526.5 815.1H1534.5M1544 815.1H1553M1526.5 820.8H1534.5M1544 820.8H1553M1526.5 826.6H1534.5M1544 826.6H1553M1526.5 832.3H1534.5M1544 832.3H1553M1526.5 838.0H1534.5M1544 838.0H1553" stroke="#3b3b3b" stroke-width="2.6"/></svg>
<div class="a" style="left:1527px;top:850px;font-size:9.5px;color:#8a8a8a">L</div>
<div class="a" style="left:1545px;top:850px;font-size:9.5px;color:#8a8a8a">R</div>
<div class="a" style="left:1515px;top:871px;width:1px;height:22px;background:#2c2c2c"></div>
<svg style="left:0;top:0" width="1616" height="940"><path d="M1530 874H1540M1542 874H1552M1530 876.6H1540M1542 876.6H1552M1530 879.2H1540M1542 879.2H1552M1530 881.8000000000001H1540M1542 881.8000000000001H1552M1530 884.4000000000001H1540M1542 884.4000000000001H1552M1530 887.0000000000001H1540M1542 887.0000000000001H1552M1530 889.6000000000001H1540M1542 889.6000000000001H1552" stroke="#3a3a3a" stroke-width="1.3"/></svg>

<!-- SCROLL + STATUS -->
<div class="a" style="left:104px;top:857px;width:1197.5px;height:7px;background:#868686;border-radius:4px"></div>
<div class="a" style="left:70px;top:874px;font-size:14px;color:#c8c8c8;letter-spacing:0.2px">Długość projektu: 03:05</div>
<div class="a" style="left:770px;top:874px;font-size:14px;color:#c8c8c8;letter-spacing:0.15px">Trwa zapisywanie projektu...</div>

<!-- CALLOUTS -->
<div class="a" style="left:120px;top:398px;width:286px;height:122px;background:#0336ee;border-radius:25px;box-shadow:0 2px 6px rgba(0,0,0,.35),0 6px 44px 6px rgba(0,0,0,.42)"></div>
<svg style="left:245px;top:519px" width="36" height="22"><path d="M0 0H35L18 21Z" fill="#0336ee"/></svg>
<div class="a" style="left:156px;top:434px;font-size:48px;font-weight:bold;color:#fff;transform:scaleX(1.12);transform-origin:0 0">Wykasuj</div>

<div class="a" style="left:486px;top:502px;width:236px;height:112px;background:#0336ee;border-radius:25px;box-shadow:0 2px 6px rgba(0,0,0,.35),0 10px 60px 10px rgba(0,0,0,.5)"></div>
<svg style="left:466px;top:543px" width="22" height="32"><path d="M21 0V31L0 15Z" fill="#0336ee"/></svg>
<div class="a" style="left:518px;top:534px;font-size:46px;font-weight:bold;color:#fff;transform:scaleX(1.068);transform-origin:0 0">Podziel</div>

</body></html>
